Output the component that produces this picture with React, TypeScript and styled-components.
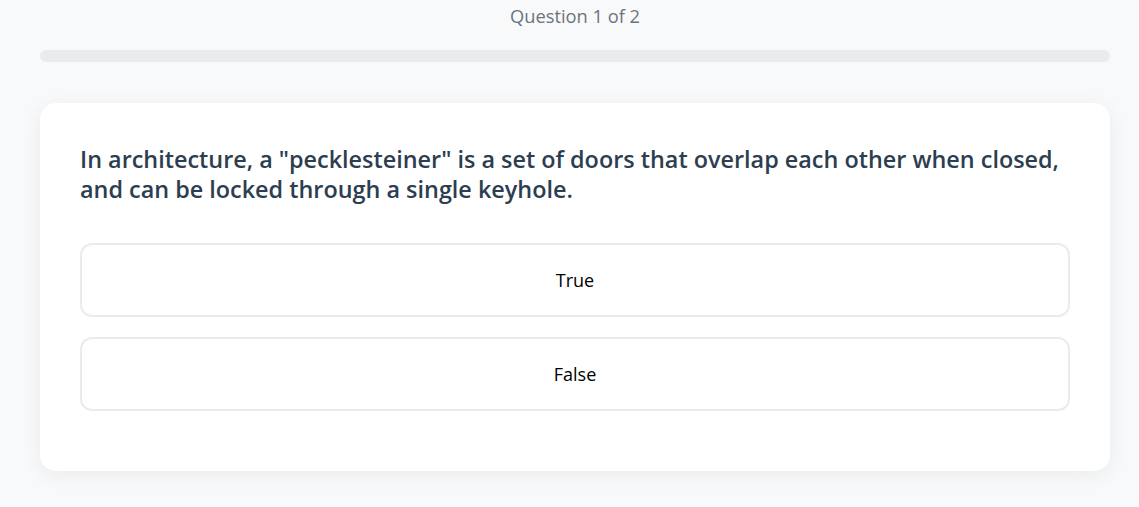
import styled, { createGlobalStyle } from "styled-components";

const GlobalStyle = createGlobalStyle`
  html, body {
    margin: 0;
    padding: 0;
    background-color: #f8f9fa;
    font-family: "Open Sans", "Noto Sans", Arial, sans-serif;
  }
`;

const Page = styled.div`
  width: 1070px;
  margin-left: 40px;
  min-height: 507px;
`;

const Counter = styled.div`
  text-align: center;
  font-size: 18.3px;
  line-height: 32px;
  color: #6c757d;
`;

const ProgressTrack = styled.div`
  margin-top: 18px;
  height: 12px;
  border-radius: 6px;
  background-color: #e9ecef;
  overflow: hidden;
`;

const ProgressFill = styled.div`
  height: 100%;
  background-color: #e9ecef;
`;

const Card = styled.div`
  margin-top: 41px;
  background-color: #ffffff;
  border-radius: 16px;
  padding: 41px 40px 60px;
  box-shadow: 0 4px 20px rgba(0, 0, 0, 0.06);
`;

const Question = styled.h2`
  margin: 0 0 39px;
  font-size: 23.4px;
  font-weight: 600;
  line-height: 30px;
  color: #2c3e50;
`;

const Answers = styled.div`
  display: flex;
  flex-direction: column;
  gap: 20px;
`;

const AnswerButton = styled.button`
  height: 74px;
  width: 100%;
  padding-top: 1px;
  background-color: #ffffff;
  border: 2px solid #e9ecef;
  border-radius: 12px;
  font-family: inherit;
  font-size: 18px;
  color: #000000;
  cursor: pointer;

  &:hover {
    border-color: #dee2e6;
  }
`;

const answers = ["True", "False"];

function App() {
  const current = 1;
  const total = 2;

  return (
    <Page>
      <GlobalStyle />
      <Counter>
        Question {current} of {total}
      </Counter>
      <ProgressTrack>
        <ProgressFill style={{ width: `${((current - 1) / total) * 100}%` }} />
      </ProgressTrack>
      <Card>
        <Question>
          In architecture, a "pecklesteiner" is a set of doors that overlap each other when closed, and can be locked through a single keyhole.
        </Question>
        <Answers>
          {answers.map((a) => (
            <AnswerButton key={a}>{a}</AnswerButton>
          ))}
        </Answers>
      </Card>
    </Page>
  );
}

export default App;
